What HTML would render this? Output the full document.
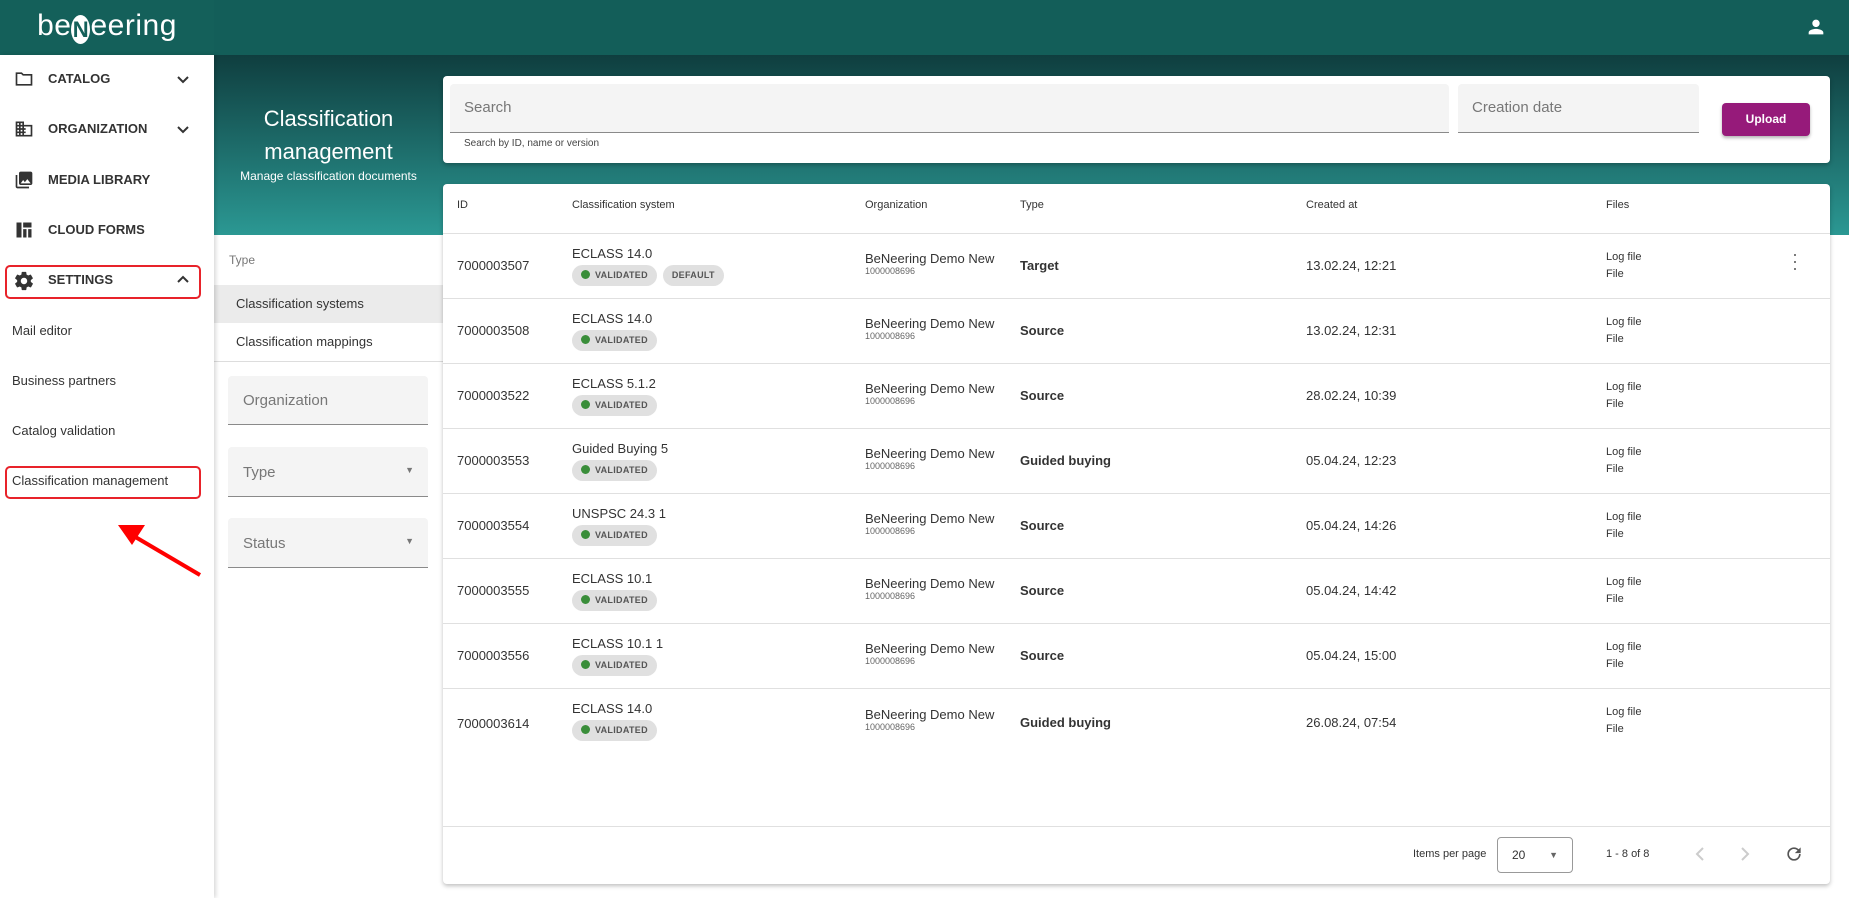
<!DOCTYPE html>
<html><head><meta charset="utf-8"><style>
*{box-sizing:border-box;margin:0;padding:0}
body{width:1849px;height:898px;overflow:hidden;font-family:"Liberation Sans",Arial,sans-serif;background:#fff;position:relative;color:#212121;white-space:nowrap}
.abs{position:absolute}
#top{left:0;top:0;width:1849px;height:55px;background:#135e59}
#logoarea{left:0;top:0;width:214px;height:55px;background:#14605a;color:#fff;font-size:30px;text-align:center;line-height:52px;letter-spacing:0.5px}
#side{left:0;top:55px;width:214px;height:843px;background:#fff;box-shadow:2px 0 4px rgba(0,0,0,.15);z-index:2}
.nav{position:absolute;left:0;width:214px;font-size:13px;font-weight:bold;color:#333}
.nav .t{position:absolute;left:48px;top:-8px}
.nav svg{position:absolute;left:13px;top:-10px}
.nav .ch{position:absolute;left:178px;top:-7px}
.sub{position:absolute;left:12px;font-size:13px;color:#333}
#hero{left:214px;top:55px;width:1635px;height:180px;background:linear-gradient(#0f3e3f,#2b9893)}
.card{position:absolute;background:#fff;border-radius:4px;box-shadow:0 2px 4px rgba(0,0,0,.25)}
.field{position:absolute;background:#f4f4f4;border-bottom:1px solid #8a8a8a;border-radius:4px 4px 0 0;color:#777;font-size:15px}
.th{position:absolute;top:199px;font-size:11px;color:#333}
.row{position:absolute;left:443px;width:1387px;height:65px;border-bottom:1px solid #e0e0e0}
.c{position:absolute;font-size:13px;color:#333;white-space:nowrap}
.chip{display:inline-block;background:#e0e0e0;border-radius:11px;height:21px;line-height:21px;padding:0 9px;font-size:9px;font-weight:bold;color:#555;margin-right:6px;letter-spacing:.3px}
.dot{display:inline-block;width:9px;height:9px;border-radius:50%;background:#3a8e3a;margin-right:5px;vertical-align:-1px}
</style></head><body>
<div id="top" class="abs"></div>
<div id="logoarea" class="abs">be<span style="display:inline-block;background:#fff;color:#14605a;border-radius:50%;width:19px;height:29px;line-height:29px;font-size:22px;vertical-align:-2px;font-weight:bold">N</span>eering</div>
<svg class="abs" style="left:1805px;top:16px" width="22" height="22" viewBox="0 0 24 24"><path fill="#fff" d="M12 12c2.2 0 4-1.8 4-4s-1.8-4-4-4-4 1.8-4 4 1.8 4 4 4zm0 2c-2.7 0-8 1.3-8 4v2h16v-2c0-2.7-5.3-4-8-4z"/></svg>
<div id="side" class="abs">
 <div class="nav" style="top:24px"><svg width="22" height="20" viewBox="0 0 24 24"><path fill="none" stroke="#333" stroke-width="2" d="M3 5h6l2 2h10v12H3z"/></svg><span class="t">CATALOG</span><svg style="left:176px;top:-7px" width="14" height="14" viewBox="0 0 14 14"><path d="M2 5l5 5 5-5" fill="none" stroke="#333" stroke-width="2"/></svg></div>
 <div class="nav" style="top:74px"><svg width="22" height="20" viewBox="0 0 24 24"><path fill="#333" d="M12 7V3H2v18h20V7H12zM6 19H4v-2h2v2zm0-4H4v-2h2v2zm0-4H4V9h2v2zm0-4H4V5h2v2zm4 12H8v-2h2v2zm0-4H8v-2h2v2zm0-4H8V9h2v2zm0-4H8V5h2v2zm10 12h-8v-2h2v-2h-2v-2h2v-2h-2V9h8v10z"/></svg><span class="t">ORGANIZATION</span><svg style="left:176px;top:-7px" width="14" height="14" viewBox="0 0 14 14"><path d="M2 5l5 5 5-5" fill="none" stroke="#333" stroke-width="2"/></svg></div>
 <div class="nav" style="top:125px"><svg width="22" height="20" viewBox="0 0 24 24"><path fill="#333" d="M22 16V4c0-1.1-.9-2-2-2H8c-1.1 0-2 .9-2 2v12c0 1.1.9 2 2 2h12c1.1 0 2-.9 2-2zm-11-4l2 2.7 3-3.7 4 5H8l3-4zM2 6v14c0 1.1.9 2 2 2h14v-2H4V6H2z"/></svg><span class="t">MEDIA LIBRARY</span></div>
 <div class="nav" style="top:175px"><svg width="22" height="20" viewBox="0 0 24 24"><path fill="#333" d="M3 3h6v18H3zM11 3h10v6H11zM11 11h4v10h-4zM17 11h4v10h-4z"/></svg><span class="t">CLOUD FORMS</span></div>
 <div class="nav" style="top:225px"><svg width="22" height="22" viewBox="0 0 24 24"><path fill="#333" d="M19.4 13c.04-.3.06-.65.06-1s-.02-.7-.07-1l2.1-1.65c.2-.15.24-.42.12-.64l-2-3.46c-.12-.22-.39-.3-.61-.22l-2.5 1c-.52-.4-1.080-.73-1.69-.98l-.38-2.65A.49.49 0 0014 2h-4c-.25 0-.46.18-.49.42l-.38 2.65c-.61.25-1.17.59-1.69.98l-2.49-1c-.23-.09-.49 0-.61.22l-2 3.46c-.13.22-.07.49.12.64L4.57 11c-.05.32-.07.66-.07 1s.02.68.07 1l-2.11 1.65c-.19.15-.24.42-.12.64l2 3.46c.12.22.39.3.61.22l2.49-1c.52.4 1.08.73 1.69.98l.38 2.65c.03.24.24.42.49.42h4c.25 0 .46-.18.49-.42l.38-2.65c.61-.25 1.17-.59 1.69-.98l2.49 1c.23.09.49 0 .61-.22l2-3.46c.12-.22.07-.49-.12-.64L19.4 13zM12 15.5c-1.93 0-3.5-1.57-3.5-3.5s1.57-3.5 3.5-3.5 3.5 1.57 3.5 3.5-1.57 3.5-3.5 3.5z"/></svg><span class="t">SETTINGS</span><svg style="left:176px;top:-7px" width="14" height="14" viewBox="0 0 14 14"><path d="M2 9l5-5 5 5" fill="none" stroke="#333" stroke-width="2"/></svg></div>
 <div class="abs" style="left:5px;top:210px;width:196px;height:34px;border:2px solid #e8232a;border-radius:5px"></div>
 <div class="sub" style="top:268px">Mail editor</div>
 <div class="sub" style="top:318px">Business partners</div>
 <div class="sub" style="top:368px">Catalog validation</div>
 <div class="sub" style="top:418px">Classification management</div>
 <div class="abs" style="left:5px;top:411px;width:196px;height:33px;border:2px solid #e8232a;border-radius:5px"></div>
 <svg class="abs" style="left:110px;top:450px" width="100" height="75" viewBox="0 0 100 75"><path d="M90 70 L22 30" stroke="#f00" stroke-width="4"/><path d="M8 20 L35 20 L22 40 Z" fill="#f00"/></svg>
</div>
<div id="hero" class="abs"></div>
<div class="abs" style="left:214px;top:102px;width:229px;text-align:center;color:#fff;font-size:22px;line-height:33px">Classification<br>management</div>
<div class="abs" style="left:214px;top:169px;width:229px;text-align:center;color:#fff;font-size:12px">Manage classification documents</div>
<div class="abs" style="left:214px;top:235px;width:229px;height:663px;background:#fff"></div>
<div class="abs" style="left:229px;top:253px;font-size:12px;color:#777">Type</div>
<div class="abs" style="left:214px;top:285px;width:229px;height:38px;background:#ebebeb"></div>
<div class="abs" style="left:236px;top:296px;font-size:13px;color:#333">Classification systems</div>
<div class="abs" style="left:236px;top:334px;font-size:13px;color:#333">Classification mappings</div>
<div class="abs" style="left:214px;top:361px;width:229px;height:1px;background:#ddd"></div>
<div class="field" style="left:228px;top:376px;width:200px;height:49px;padding:16px 15px">Organization</div>
<div class="field" style="left:228px;top:447px;width:200px;height:50px;padding:17px 15px">Type<span style="position:absolute;right:14px;top:18px;font-size:9px">&#9660;</span></div>
<div class="field" style="left:228px;top:518px;width:200px;height:50px;padding:17px 15px">Status<span style="position:absolute;right:14px;top:18px;font-size:9px">&#9660;</span></div>

<div class="card" style="left:443px;top:76px;width:1387px;height:87px"></div>
<div class="field" style="left:450px;top:84px;width:999px;height:49px;padding:15px 14px">Search</div>
<div class="abs" style="left:464px;top:138px;font-size:10px;color:#444">Search by ID, name or version</div>
<div class="field" style="left:1458px;top:84px;width:241px;height:49px;padding:15px 14px">Creation date</div>
<div class="abs" style="left:1722px;top:103px;width:88px;height:33px;background:#961a7a;border-radius:4px;color:#fff;font-size:12px;font-weight:bold;text-align:center;line-height:33px;box-shadow:0 2px 3px rgba(0,0,0,.3)">Upload</div>

<div class="card" style="left:443px;top:184px;width:1387px;height:700px"></div>
<div class="abs" style="left:443px;top:233px;width:1387px;height:1px;background:#e0e0e0"></div>
<div class="th" style="left:457px">ID</div><div class="th" style="left:572px">Classification system</div><div class="th" style="left:865px">Organization</div><div class="th" style="left:1020px">Type</div><div class="th" style="left:1306px">Created at</div><div class="th" style="left:1606px">Files</div>

<div class="row" style="top:234px"></div><div class="row" style="top:299px"></div><div class="row" style="top:364px"></div><div class="row" style="top:429px"></div><div class="row" style="top:494px"></div><div class="row" style="top:559px"></div><div class="row" style="top:624px"></div>

<div style="position:absolute;left:0;top:234px">
<div class="c" style="left:457px;top:24px">7000003507</div><div class="c" style="left:572px;top:12px">ECLASS 14.0<br><div style="margin-top:4px"><span class="chip"><span class="dot"></span>VALIDATED</span><span class="chip">DEFAULT</span></div></div><div class="c" style="left:865px;top:17px">BeNeering Demo New<br><span style="font-size:9px;color:#666;position:relative;top:-4px">1000008696</span></div><div class="c" style="left:1020px;top:24px;font-weight:bold">Target</div><div class="c" style="left:1306px;top:24px">13.02.24, 12:21</div><div class="c" style="left:1606px;top:15px;font-size:11px;line-height:17px">Log file<br>File</div><div class="c" style="left:1792px;top:17px;font-size:18px;color:#666;line-height:7px">·<br>·<br>·</div>
</div>
<div style="position:absolute;left:0;top:299px">
<div class="c" style="left:457px;top:24px">7000003508</div><div class="c" style="left:572px;top:12px">ECLASS 14.0<br><div style="margin-top:4px"><span class="chip"><span class="dot"></span>VALIDATED</span></div></div><div class="c" style="left:865px;top:17px">BeNeering Demo New<br><span style="font-size:9px;color:#666;position:relative;top:-4px">1000008696</span></div><div class="c" style="left:1020px;top:24px;font-weight:bold">Source</div><div class="c" style="left:1306px;top:24px">13.02.24, 12:31</div><div class="c" style="left:1606px;top:15px;font-size:11px;line-height:17px">Log file<br>File</div>
</div>
<div style="position:absolute;left:0;top:364px">
<div class="c" style="left:457px;top:24px">7000003522</div><div class="c" style="left:572px;top:12px">ECLASS 5.1.2<br><div style="margin-top:4px"><span class="chip"><span class="dot"></span>VALIDATED</span></div></div><div class="c" style="left:865px;top:17px">BeNeering Demo New<br><span style="font-size:9px;color:#666;position:relative;top:-4px">1000008696</span></div><div class="c" style="left:1020px;top:24px;font-weight:bold">Source</div><div class="c" style="left:1306px;top:24px">28.02.24, 10:39</div><div class="c" style="left:1606px;top:15px;font-size:11px;line-height:17px">Log file<br>File</div>
</div>
<div style="position:absolute;left:0;top:429px">
<div class="c" style="left:457px;top:24px">7000003553</div><div class="c" style="left:572px;top:12px">Guided Buying 5<br><div style="margin-top:4px"><span class="chip"><span class="dot"></span>VALIDATED</span></div></div><div class="c" style="left:865px;top:17px">BeNeering Demo New<br><span style="font-size:9px;color:#666;position:relative;top:-4px">1000008696</span></div><div class="c" style="left:1020px;top:24px;font-weight:bold">Guided buying</div><div class="c" style="left:1306px;top:24px">05.04.24, 12:23</div><div class="c" style="left:1606px;top:15px;font-size:11px;line-height:17px">Log file<br>File</div>
</div>
<div style="position:absolute;left:0;top:494px">
<div class="c" style="left:457px;top:24px">7000003554</div><div class="c" style="left:572px;top:12px">UNSPSC 24.3 1<br><div style="margin-top:4px"><span class="chip"><span class="dot"></span>VALIDATED</span></div></div><div class="c" style="left:865px;top:17px">BeNeering Demo New<br><span style="font-size:9px;color:#666;position:relative;top:-4px">1000008696</span></div><div class="c" style="left:1020px;top:24px;font-weight:bold">Source</div><div class="c" style="left:1306px;top:24px">05.04.24, 14:26</div><div class="c" style="left:1606px;top:15px;font-size:11px;line-height:17px">Log file<br>File</div>
</div>
<div style="position:absolute;left:0;top:559px">
<div class="c" style="left:457px;top:24px">7000003555</div><div class="c" style="left:572px;top:12px">ECLASS 10.1<br><div style="margin-top:4px"><span class="chip"><span class="dot"></span>VALIDATED</span></div></div><div class="c" style="left:865px;top:17px">BeNeering Demo New<br><span style="font-size:9px;color:#666;position:relative;top:-4px">1000008696</span></div><div class="c" style="left:1020px;top:24px;font-weight:bold">Source</div><div class="c" style="left:1306px;top:24px">05.04.24, 14:42</div><div class="c" style="left:1606px;top:15px;font-size:11px;line-height:17px">Log file<br>File</div>
</div>
<div style="position:absolute;left:0;top:624px">
<div class="c" style="left:457px;top:24px">7000003556</div><div class="c" style="left:572px;top:12px">ECLASS 10.1 1<br><div style="margin-top:4px"><span class="chip"><span class="dot"></span>VALIDATED</span></div></div><div class="c" style="left:865px;top:17px">BeNeering Demo New<br><span style="font-size:9px;color:#666;position:relative;top:-4px">1000008696</span></div><div class="c" style="left:1020px;top:24px;font-weight:bold">Source</div><div class="c" style="left:1306px;top:24px">05.04.24, 15:00</div><div class="c" style="left:1606px;top:15px;font-size:11px;line-height:17px">Log file<br>File</div>
</div>
<div style="position:absolute;left:0;top:690px">
<div class="c" style="left:457px;top:26px">7000003614</div><div class="c" style="left:572px;top:11px">ECLASS 14.0<br><div style="margin-top:4px"><span class="chip"><span class="dot"></span>VALIDATED</span></div></div><div class="c" style="left:865px;top:17px">BeNeering Demo New<br><span style="font-size:9px;color:#666;position:relative;top:-4px">1000008696</span></div><div class="c" style="left:1020px;top:25px;font-weight:bold">Guided buying</div><div class="c" style="left:1306px;top:25px">26.08.24, 07:54</div><div class="c" style="left:1606px;top:14px;font-size:11px;line-height:17px">Log file<br>File</div>
</div>

<div class="abs" style="left:443px;top:826px;width:1387px;height:1px;background:#e0e0e0"></div>
<div class="abs" style="left:1413px;top:848px;font-size:11px;color:#333">Items per page</div>
<div class="abs" style="left:1497px;top:837px;width:76px;height:36px;border:1px solid #999;border-radius:4px;font-size:12px;padding:10px 14px;color:#333">20<span style="position:absolute;right:14px;top:12px;font-size:9px;color:#666">&#9660;</span></div>
<div class="abs" style="left:1606px;top:848px;font-size:11px;color:#333">1 - 8 of 8</div>
<svg class="abs" style="left:1692px;top:845px" width="16" height="18" viewBox="0 0 16 18"><path d="M11 3 L5 9 L11 15" fill="none" stroke="#ccc" stroke-width="2"/></svg>
<svg class="abs" style="left:1737px;top:845px" width="16" height="18" viewBox="0 0 16 18"><path d="M5 3 L11 9 L5 15" fill="none" stroke="#ccc" stroke-width="2"/></svg>
<svg class="abs" style="left:1784px;top:844px" width="20" height="20" viewBox="0 0 24 24"><path fill="#555" d="M17.65 6.35A7.960 7.96 0 0012 4a8 8 0 108 8h-2a6 6 0 11-1.76-4.24L13 11h7V4l-2.35 2.35z"/></svg>
</body></html>
